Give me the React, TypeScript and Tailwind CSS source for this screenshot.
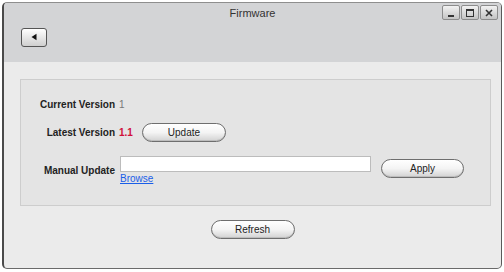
const font = "font-['Liberation_Sans',Arial,sans-serif]";

function PillButton({ label, className = "" }: { label: string; className?: string }) {
  return (
    <button
      type="button"
      className={`h-[19px] rounded-full border border-[#6e6e6e] bg-gradient-to-b from-white via-[#f4f4f4] to-[#d2d2d2] text-[10px] font-normal text-[#222] shadow-[inset_0_-1px_0_#bdbdbd] ${className}`}
    >
      {label}
    </button>
  );
}

function WinButton({ children }: { children: React.ReactNode }) {
  return (
    <div className="flex h-[15px] w-[18px] items-center justify-center rounded-[2px] border border-[#8c8c8c] bg-gradient-to-b from-[#f2f2f2] to-[#c4c4c4] text-[#444]">
      {children}
    </div>
  );
}

export default function App() {
  return (
    <div className={`h-[272px] w-[504px] bg-white pl-[2px] pt-[2px] ${font}`}>
      <div className="flex h-[267px] w-[500px] flex-col overflow-hidden rounded-[5px] border border-[#8e8e8e] border-l-2 border-l-[#4a4a4a] border-r-[#5a5a5a] border-b-[#6a6a6a] bg-[#ebebeb]">
        {/* title bar */}
        <div className="relative h-[59px] shrink-0 bg-[#d3d4d6]">
          <div className="pt-[2px] text-center text-[11px] text-[#333]">Firmware</div>
          <div className="absolute right-[3px] top-[2px] flex gap-[1px]">
            <WinButton>
              <div className="mt-[6px] h-[2px] w-[6px] bg-[#333]" />
            </WinButton>
            <WinButton>
              <div className="h-[8px] w-[8px] border border-t-2 border-[#333]" />
            </WinButton>
            <WinButton>
              <svg width="8" height="8" viewBox="0 0 8 8">
                <path d="M1 1L7 7M7 1L1 7" stroke="#333" strokeWidth="1.6" />
              </svg>
            </WinButton>
          </div>
          <div className="ml-[17px] mt-[6px] flex h-[19px] w-[26px] items-center justify-center rounded-[3px] border border-[#555] bg-gradient-to-b from-white to-[#cfcfcf]">
            <svg width="8" height="8" viewBox="0 0 8 8">
              <path d="M1.5 4L6.5 0.8V7.2Z" fill="#111" />
            </svg>
          </div>
        </div>

        {/* content */}
        <div className="flex flex-1 flex-col pl-[16px] pr-[10px] pt-[17px]">
          <div className="h-[127px] border border-[#cdcdcd] bg-[#e4e4e4] pt-[17px] text-[10px] font-bold text-[#222]">
            <div className="flex h-[14px] items-center">
              <span className="w-[94px] text-right">Current Version</span>
              <span className="ml-[4px] font-normal text-[#777]">1</span>
            </div>
            <div className="mt-[12px] flex items-center">
              <span className="w-[94px] text-right">Latest Version</span>
              <span className="ml-[4px] text-[#d0103a]">1.1</span>
              <PillButton label="Update" className="ml-[9px] w-[84px]" />
            </div>
            <div className="mt-[14px] flex">
              <span className="mt-[7px] w-[94px] text-right">Manual Update</span>
              <div className="ml-[5px] flex flex-col">
                <div className="h-[16px] w-[251px] border border-[#bcbcbc] bg-white" />
                <a className="mt-[1px] text-[10px] font-normal leading-[12px] text-[#1a5ee8] underline">Browse</a>
              </div>
              <PillButton label="Apply" className="ml-[10px] mt-[3px] w-[83px]" />
            </div>
          </div>
          <div className="mt-[14px] flex justify-center pr-[6px]">
            <PillButton label="Refresh" className="w-[84px]" />
          </div>
        </div>
      </div>
    </div>
  );
}
